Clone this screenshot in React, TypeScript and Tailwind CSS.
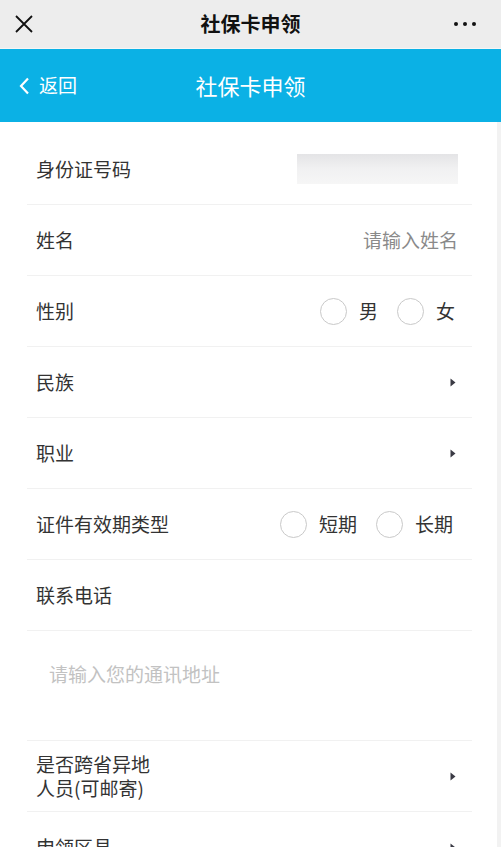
const font = { fontFamily: '"Noto Sans CJK SC", "Noto Sans", sans-serif' };

function Arrow() {
  return (
    <svg width="6" height="9" viewBox="0 0 6 9" className="shrink-0">
      <path d="M0.5 0.5 L5.5 4.5 L0.5 8.5 Z" fill="#3a3a44" />
    </svg>
  );
}

function Radio({ label }: { label: string }) {
  return (
    <div className="flex items-center">
      <span className="h-[27px] w-[27px] rounded-full border border-[#c9c9c9] bg-white" />
      <span className="ml-[12px] text-[19px] text-[#333]">{label}</span>
    </div>
  );
}

function Row({
  label,
  children,
  className = "",
}: {
  label: React.ReactNode;
  children?: React.ReactNode;
  className?: string;
}) {
  return (
    <div
      className={`flex h-[71px] items-center justify-between border-b border-[#f1f1f1] pl-[9px] pr-[14px] ${className}`}
    >
      <div className="text-[19px] leading-[24px] text-[#333]">{label}</div>
      {children}
    </div>
  );
}

export default function App() {
  return (
    <div className="flex h-[847px] w-[501px] flex-col overflow-hidden bg-white" style={font}>
      <div className="relative flex h-[49px] shrink-0 items-center justify-between border-b border-[#f6f6f6] bg-[#ededed] px-[15px]">
        <svg width="18" height="18" viewBox="0 0 18 18">
          <path d="M1 1 L17 17 M17 1 L1 17" stroke="#111" strokeWidth="1.8" />
        </svg>
        <span className="absolute left-0 right-0 text-center text-[20px] font-bold text-[#111]">
          社保卡申领
        </span>
        <div className="mr-[10px] flex gap-[5px]">
          <span className="h-[4px] w-[4px] rounded-full bg-[#111]" />
          <span className="h-[4px] w-[4px] rounded-full bg-[#111]" />
          <span className="h-[4px] w-[4px] rounded-full bg-[#111]" />
        </div>
      </div>

      <div className="relative flex h-[73px] shrink-0 items-center bg-[#0bb1e5] pl-[19px] text-white">
        <svg width="11" height="18" viewBox="0 0 11 18">
          <path d="M9 1.5 L2 9 L9 16.5" fill="none" stroke="#fff" strokeWidth="2.2" />
        </svg>
        <span className="ml-[9px] text-[19px]">返回</span>
        <span className="absolute left-0 right-0 text-center text-[22px]">社保卡申领</span>
      </div>

      <div className="flex flex-1">
        <div className="flex-1 pl-[27px] pr-[25px] pt-[12px]">
          <Row label="身份证号码">
            <div className="h-[30px] w-[161px] bg-gradient-to-b from-[#e4e4e6] via-[#f1f1f2] to-[#f6f6f6]" />
          </Row>
          <Row label="姓名">
            <span className="text-[19px] text-[#8a8a8a]">请输入姓名</span>
          </Row>
          <Row label="性别" className="pr-[17px]">
            <div className="flex items-center gap-[19px]">
              <Radio label="男" />
              <Radio label="女" />
            </div>
          </Row>
          <Row label="民族" className="pr-[16px]">
            <Arrow />
          </Row>
          <Row label="职业" className="pr-[16px]">
            <Arrow />
          </Row>
          <Row label="证件有效期类型" className="pr-[19px]">
            <div className="flex items-center gap-[19px]">
              <Radio label="短期" />
              <Radio label="长期" />
            </div>
          </Row>
          <Row label="联系电话" />
          <div className="h-[110px] border-b border-[#f1f1f1] pl-[22px] pt-[29px] text-[19px] text-[#c2c2c2]">
            请输入您的通讯地址
          </div>
          <Row
            label={
              <>
                是否跨省异地
                <br />
                人员(可邮寄)
              </>
            }
            className="pr-[16px]"
          >
            <Arrow />
          </Row>
          <Row label="申领区县" className="pr-[16px]">
            <Arrow />
          </Row>
        </div>
        <div className="w-[4px] bg-[#f2f2f2]" />
      </div>
    </div>
  );
}
